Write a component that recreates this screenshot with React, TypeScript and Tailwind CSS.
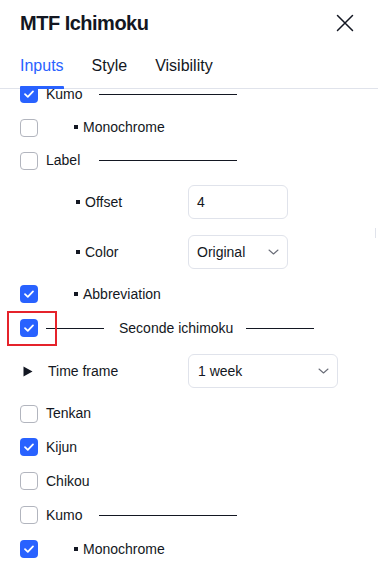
import React from "react";

const font = { fontFamily: "'Trebuchet MS', 'Liberation Sans', Arial, sans-serif" };

function Check({ checked }: { checked?: boolean }) {
  return checked ? (
    <div className="w-[18px] h-[18px] rounded-[4px] bg-[#2962ff] flex items-center justify-center shrink-0">
      <svg width="12" height="10" viewBox="0 0 12 10" fill="none">
        <path d="M2 5.2 L4.8 7.8 L10 2.4" stroke="white" strokeWidth="1.8" strokeLinecap="round" strokeLinejoin="round" />
      </svg>
    </div>
  ) : (
    <div className="w-[18px] h-[18px] rounded-[4px] border border-[#b2b5be] bg-white shrink-0" />
  );
}

function Chevron() {
  return (
    <svg width="11" height="6" viewBox="0 0 11 6" fill="none">
      <path d="M1 1 L5.5 5 L10 1" stroke="#6a6d78" strokeWidth="1.1" strokeLinecap="round" strokeLinejoin="round" />
    </svg>
  );
}

function Bullet() {
  return <span className="inline-block w-[4px] h-[4px] bg-[#131722] mr-[5px] align-middle relative top-[-1px]" />;
}

function CheckRow({ checked, label, h = "h-[33px]" }: { checked?: boolean; label: string; h?: string }) {
  return (
    <div className={`${h} flex items-center pl-5`}>
      <Check checked={checked} />
      <span className="ml-[8px] text-[14px] text-[#131722]">{label}</span>
    </div>
  );
}

function GroupRow({ checked, label, h = "h-[33px]" }: { checked?: boolean; label: string; h?: string }) {
  return (
    <div className={`${h} flex items-center pl-5`}>
      <Check checked={checked} />
      <span className="ml-[8px] w-[53px] text-[14px] text-[#131722]">{label}</span>
      <div className="w-[138px] border-t border-[#131722]" />
    </div>
  );
}

function SubCheckRow({ checked, label, h = "h-[33px]" }: { checked?: boolean; label: string; h?: string }) {
  return (
    <div className={`${h} flex items-center pl-5`}>
      <Check checked={checked} />
      <span className="ml-[36px] text-[14px] text-[#131722]">
        <Bullet />
        {label}
      </span>
    </div>
  );
}

export default function App() {
  return (
    <div className="w-[378px] h-[565px] bg-white overflow-hidden relative flex flex-col" style={font}>
      {/* Header */}
      <div className="h-[44px] flex items-center pl-5 pr-[24px] shrink-0 pt-[1px]">
        <div className="text-[20px] font-semibold text-[#131722] tracking-[-0.5px]">MTF Ichimoku</div>
        <div className="ml-auto">
          <svg width="18" height="18" viewBox="0 0 18 18" fill="none">
            <path d="M1.5 1.5 L16.5 16.5 M16.5 1.5 L1.5 16.5" stroke="#131722" strokeWidth="1.5" strokeLinecap="round" />
          </svg>
        </div>
      </div>
      {/* Tabs */}
      <div className="h-[45px] flex items-end pl-5 border-b border-[#e0e3eb] shrink-0 relative">
        <div className="flex gap-[28px] text-[16px] text-[#131722]">
          <div className="relative pb-[10px] text-[#2962ff]">
            Inputs
            <div className="absolute left-0 right-0 bottom-[-1px] h-[3px] bg-[#2962ff] rounded-t-[1px]" />
          </div>
          <div className="pb-[10px]">Style</div>
          <div className="pb-[10px]">Visibility</div>
        </div>
      </div>
      {/* Content */}
      <div className="flex-1 overflow-hidden relative">
        <div className="flex flex-col mt-[-12px]">
          <GroupRow checked label="Kumo" h="h-[34px]" />
          <SubCheckRow label="Monochrome" />
          <GroupRow label="Label" />
          <div className="h-[50px] flex items-center pl-[76px]">
            <span className="w-[112px] text-[14px] text-[#131722]">
              <Bullet />Offset
            </span>
            <div className="w-[100px] h-[34px] border border-[#e0e3eb] rounded-[6px] flex items-center px-[8px] text-[14px] text-[#131722]">4</div>
          </div>
          <div className="h-[50px] flex items-center pl-[76px]">
            <span className="w-[112px] text-[14px] text-[#131722]">
              <Bullet />Color
            </span>
            <div className="w-[100px] h-[34px] border border-[#e0e3eb] rounded-[6px] flex items-center pl-[8px] pr-[8px] text-[14px] text-[#131722]">
              <span>Original</span>
              <span className="ml-auto"><Chevron /></span>
            </div>
          </div>
          <SubCheckRow checked label="Abbreviation" h="h-[34px]" />
          <div className="h-[34px] flex items-center pl-5">
            <Check checked />
            <div className="w-[58px] border-t border-[#131722] ml-[8px]" />
            <span className="ml-[15px] mr-[13px] text-[14px] text-[#131722]">Seconde ichimoku</span>
            <div className="w-[68px] border-t border-[#131722]" />
          </div>
          <div className="h-[52px] flex items-center pl-[23px]">
            <svg width="10" height="11" viewBox="0 0 10 11"><path d="M0.5 0.5 L9.5 5.5 L0.5 10.5 Z" fill="#131722" /></svg>
            <span className="ml-[15px] w-[140px] text-[14px] text-[#131722]">Time frame</span>
            <div className="w-[150px] h-[34px] border border-[#e0e3eb] rounded-[6px] flex items-center pl-[9px] pr-[8px] text-[14px] text-[#131722]">
              <span>1 week</span>
              <span className="ml-auto"><Chevron /></span>
            </div>
          </div>
          <CheckRow label="Tenkan" />
          <CheckRow checked label="Kijun" h="h-[34px]" />
          <CheckRow label="Chikou" h="h-[34px]" />
          <GroupRow label="Kumo" h="h-[34px]" />
          <SubCheckRow checked label="Monochrome" h="h-[34px]" />
        </div>
        {/* scrollbar hint */}
        <div className="absolute right-[2px] top-[139px] w-[1px] h-[10px] bg-[#e0e3eb]" />
      </div>
      {/* red highlight annotation */}
      <div className="absolute left-[7px] top-[311px] w-[50px] h-[35px] border-2 border-[#e5232b] pointer-events-none" />
    </div>
  );
}
